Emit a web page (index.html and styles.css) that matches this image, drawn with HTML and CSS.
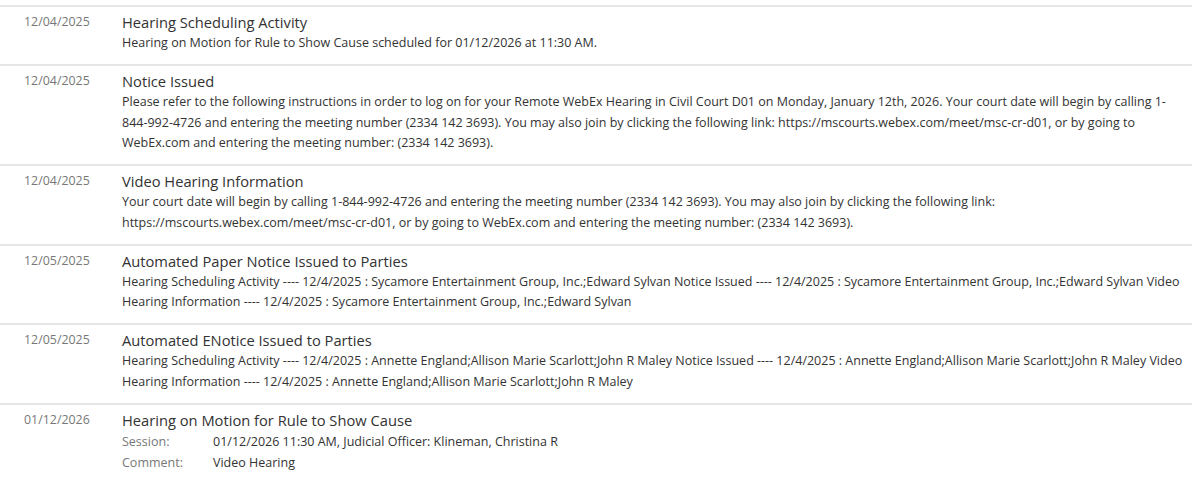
FILE: index.html
```html
<!DOCTYPE html>
<html lang="en">
<head>
    <meta charset="UTF-8">
    <meta name="viewport" content="width=device-width, initial-scale=1.0">
    <title>Case Events</title>
    <link rel="stylesheet" href="styles.css">
</head>
<body>
    <div class="events">
        <div class="event">
            <div class="event-date">12/04/2025</div>
            <div class="event-body">
                <div class="event-title">Hearing Scheduling Activity</div>
                <div class="event-text">Hearing on Motion for Rule to Show Cause scheduled for 01/12/2026 at 11:30 AM.</div>
            </div>
        </div>
        <div class="event">
            <div class="event-date">12/04/2025</div>
            <div class="event-body">
                <div class="event-title">Notice Issued</div>
                <div class="event-text">Please refer to the following instructions in order to log on for your Remote WebEx Hearing in Civil Court D01 on Monday, January 12th, 2026. Your court date will begin by calling 1-844-992-4726 and entering the meeting number (2334 142 3693). You may also join by clicking the following link: https://mscourts.webex.com/meet/msc-cr-d01, or by going to WebEx.com and entering the meeting number: (2334 142 3693).</div>
            </div>
        </div>
        <div class="event">
            <div class="event-date">12/04/2025</div>
            <div class="event-body">
                <div class="event-title">Video Hearing Information</div>
                <div class="event-text">Your court date will begin by calling 1-844-992-4726 and entering the meeting number (2334 142 3693). You may also join by clicking the following link: https://mscourts.webex.com/meet/msc-cr-d01, or by going to WebEx.com and entering the meeting number: (2334 142 3693).</div>
            </div>
        </div>
        <div class="event">
            <div class="event-date">12/05/2025</div>
            <div class="event-body">
                <div class="event-title">Automated Paper Notice Issued to Parties</div>
                <div class="event-text">Hearing Scheduling Activity ---- 12/4/2025 : Sycamore Entertainment Group, Inc.;Edward Sylvan Notice Issued ---- 12/4/2025 : Sycamore Entertainment Group, Inc.;Edward Sylvan Video Hearing Information ---- 12/4/2025 : Sycamore Entertainment Group, Inc.;Edward Sylvan</div>
            </div>
        </div>
        <div class="event">
            <div class="event-date">12/05/2025</div>
            <div class="event-body">
                <div class="event-title">Automated ENotice Issued to Parties</div>
                <div class="event-text">Hearing Scheduling Activity ---- 12/4/2025 : Annette England;Allison Marie Scarlott;John R Maley Notice Issued ---- 12/4/2025 : Annette England;Allison Marie Scarlott;John R Maley Video Hearing Information ---- 12/4/2025 : Annette England;Allison Marie Scarlott;John R Maley</div>
            </div>
        </div>
        <div class="event">
            <div class="event-date">01/12/2026</div>
            <div class="event-body">
                <div class="event-title">Hearing on Motion for Rule to Show Cause</div>
                <div class="event-detail">
                    <span class="detail-label">Session:</span>
                    <span class="detail-value">01/12/2026 11:30 AM, Judicial Officer: Klineman, Christina R</span>
                    <span class="detail-label">Comment:</span>
                    <span class="detail-value">Video Hearing</span>
                </div>
            </div>
        </div>
    </div>
</body>
</html>
```

FILE: styles.css
```css
body {
    font-family: "Open Sans", "Liberation Sans", sans-serif;
    background-color: #fff;
    color: #333;
    margin: 0;
    padding: 5px 8px 0 0;
}
.events {
    border-top: 2px solid #e6e6e6;
}
.event {
    display: flex;
    padding: 4px 0 10.5px 0;
    border-bottom: 2px solid #e6e6e6;
}
.event:last-child {
    border-bottom: none;
}
.event-date {
    width: 98px;
    padding-left: 24px;
    flex-shrink: 0;
    font-size: 12.4px;
    line-height: 22px;
    color: #777;
}
.event-body {
    flex: 1;
    padding-right: 6px;
}
.event-title {
    font-size: 14.7px;
    line-height: 22px;
    color: #333;
}
.event-text {
    font-size: 12.5px;
    line-height: 20.5px;
    color: #333;
}
.event-detail {
    display: grid;
    grid-template-columns: 91px 1fr;
    font-size: 12.5px;
    line-height: 21.5px;
}
.detail-label {
    color: #777;
}
```
